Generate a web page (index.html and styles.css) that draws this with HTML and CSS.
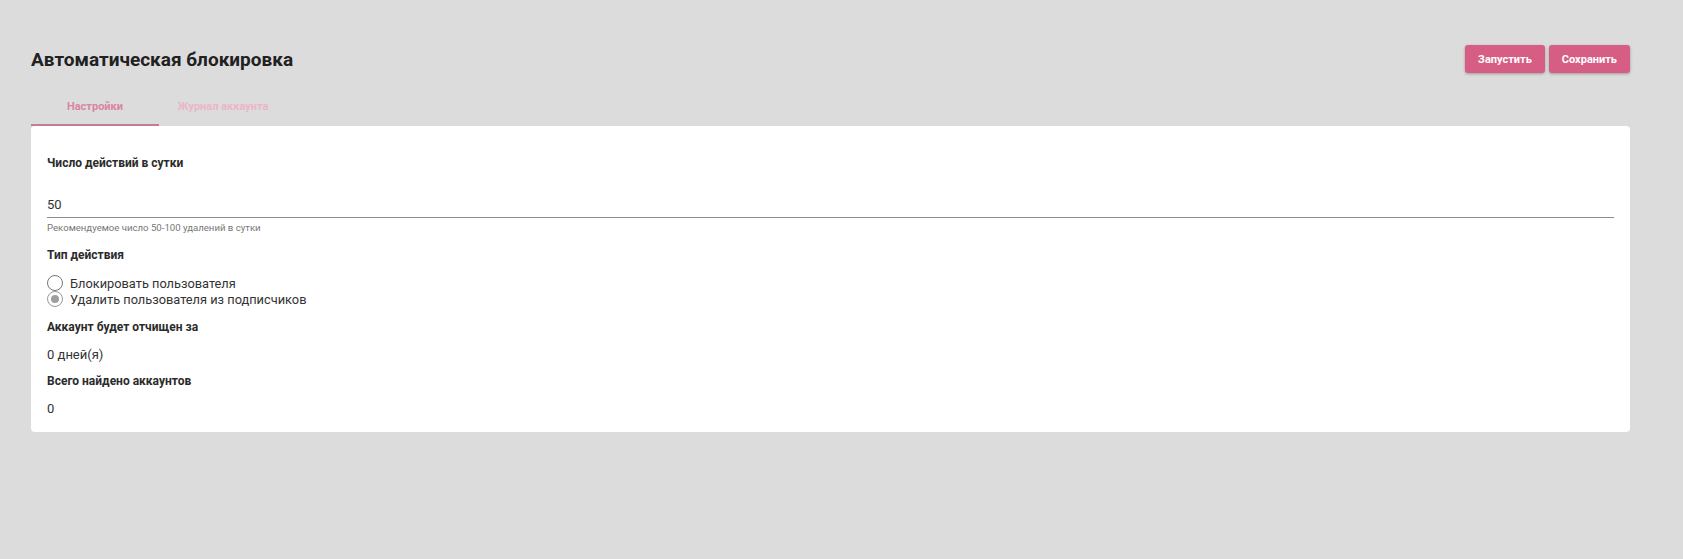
FILE: index.html
```html
<!DOCTYPE html>
<html lang="ru">
<head>
  <meta charset="UTF-8" />
  <title>Автоматическая блокировка</title>
  <link rel="stylesheet" href="styles.css">
</head>
<body>
  <div class="page">
    <header class="top">
      <h1>Автоматическая блокировка</h1>
      <div class="actions">
        <button class="btn">Запустить</button>
        <button class="btn">Сохранить</button>
      </div>
    </header>

    <nav class="tabs">
      <div class="tab active">Настройки</div>
      <div class="tab">Журнал аккаунта</div>
    </nav>

    <div class="card">
      <div class="label first">Число действий в сутки</div>
      <div class="field">50</div>
      <div class="hint">Рекомендуемое число 50-100 удалений в сутки</div>

      <div class="label type">Тип действия</div>
      <div class="radios">
        <label class="radio"><span class="dot"></span>Блокировать пользователя</label>
        <label class="radio"><span class="dot checked"></span>Удалить пользователя из подписчиков</label>
      </div>

      <div class="label after-radio">Аккаунт будет отчищен за</div>
      <div class="value">0 дней(я)</div>

      <div class="label">Всего найдено аккаунтов</div>
      <div class="value">0</div>
    </div>
  </div>
</body>
</html>
```

FILE: styles.css
```css
body {
  margin: 0;
  padding: 0;
  background: #dcdcdc;
  font-family: Roboto, 'Liberation Sans', sans-serif;
  color: #333;
}
.page {
  padding: 45px 53px 0 31px;
}
.top {
  display: flex;
  justify-content: space-between;
  align-items: center;
  height: 28px;
}
.top h1 {
  margin: 0;
  font-size: 19px;
  font-weight: bold;
  color: #212121;
}
.actions {
  display: flex;
  gap: 4px;
}
.btn {
  height: 28px;
  padding: 0 13px;
  border: none;
  border-radius: 3px;
  background: #d65d84;
  color: #fff;
  font-family: Roboto, 'Liberation Sans', sans-serif;
  font-size: 11px;
  font-weight: bold;
  box-shadow: 0 1px 3px rgba(0,0,0,0.3);
  cursor: pointer;
}
.tabs {
  display: flex;
  margin-top: 16px;
}
.tab {
  width: 128px;
  height: 35px;
  display: flex;
  align-items: center;
  justify-content: center;
  font-size: 11px;
  font-weight: bold;
  color: #ecb5c7;
  border-bottom: 2px solid transparent;
}
.tab.active {
  color: #d985a2;
  border-bottom-color: #c47d95;
}
.card {
  background: #fff;
  border-radius: 4px;
  padding: 29px 16px 15px;
}
.label {
  font-size: 12px;
  font-weight: bold;
  line-height: 16px;
  color: #2b2b2b;
  margin-top: 10px;
}
.label.first {
  margin-top: 0;
}
.label.type {
  margin-top: 12px;
}
.label.after-radio {
  margin-top: 12px;
}
.field {
  margin-top: 24px;
  font-size: 13px;
  line-height: 20px;
  padding-bottom: 2px;
  border-bottom: 1px solid #8c8c8c;
}
.hint {
  margin-top: 3px;
  font-size: 9.6px;
  line-height: 14px;
  color: #777;
}
.radios {
  margin-top: 12px;
}
.radio {
  display: flex;
  align-items: center;
  height: 16px;
  font-size: 12.8px;
  color: #333;
}
.dot {
  width: 14px;
  height: 14px;
  border: 1px solid #777;
  border-radius: 50%;
  margin-right: 7px;
  position: relative;
  box-sizing: content-box;
}
.dot.checked {
  border-color: #999;
}
.dot.checked::after {
  content: "";
  position: absolute;
  left: 3px;
  top: 3px;
  width: 8px;
  height: 8px;
  border-radius: 50%;
  background: #9e9e9e;
}
.value {
  margin-top: 12px;
  font-size: 13px;
  line-height: 16px;
  color: #333;
}
```
